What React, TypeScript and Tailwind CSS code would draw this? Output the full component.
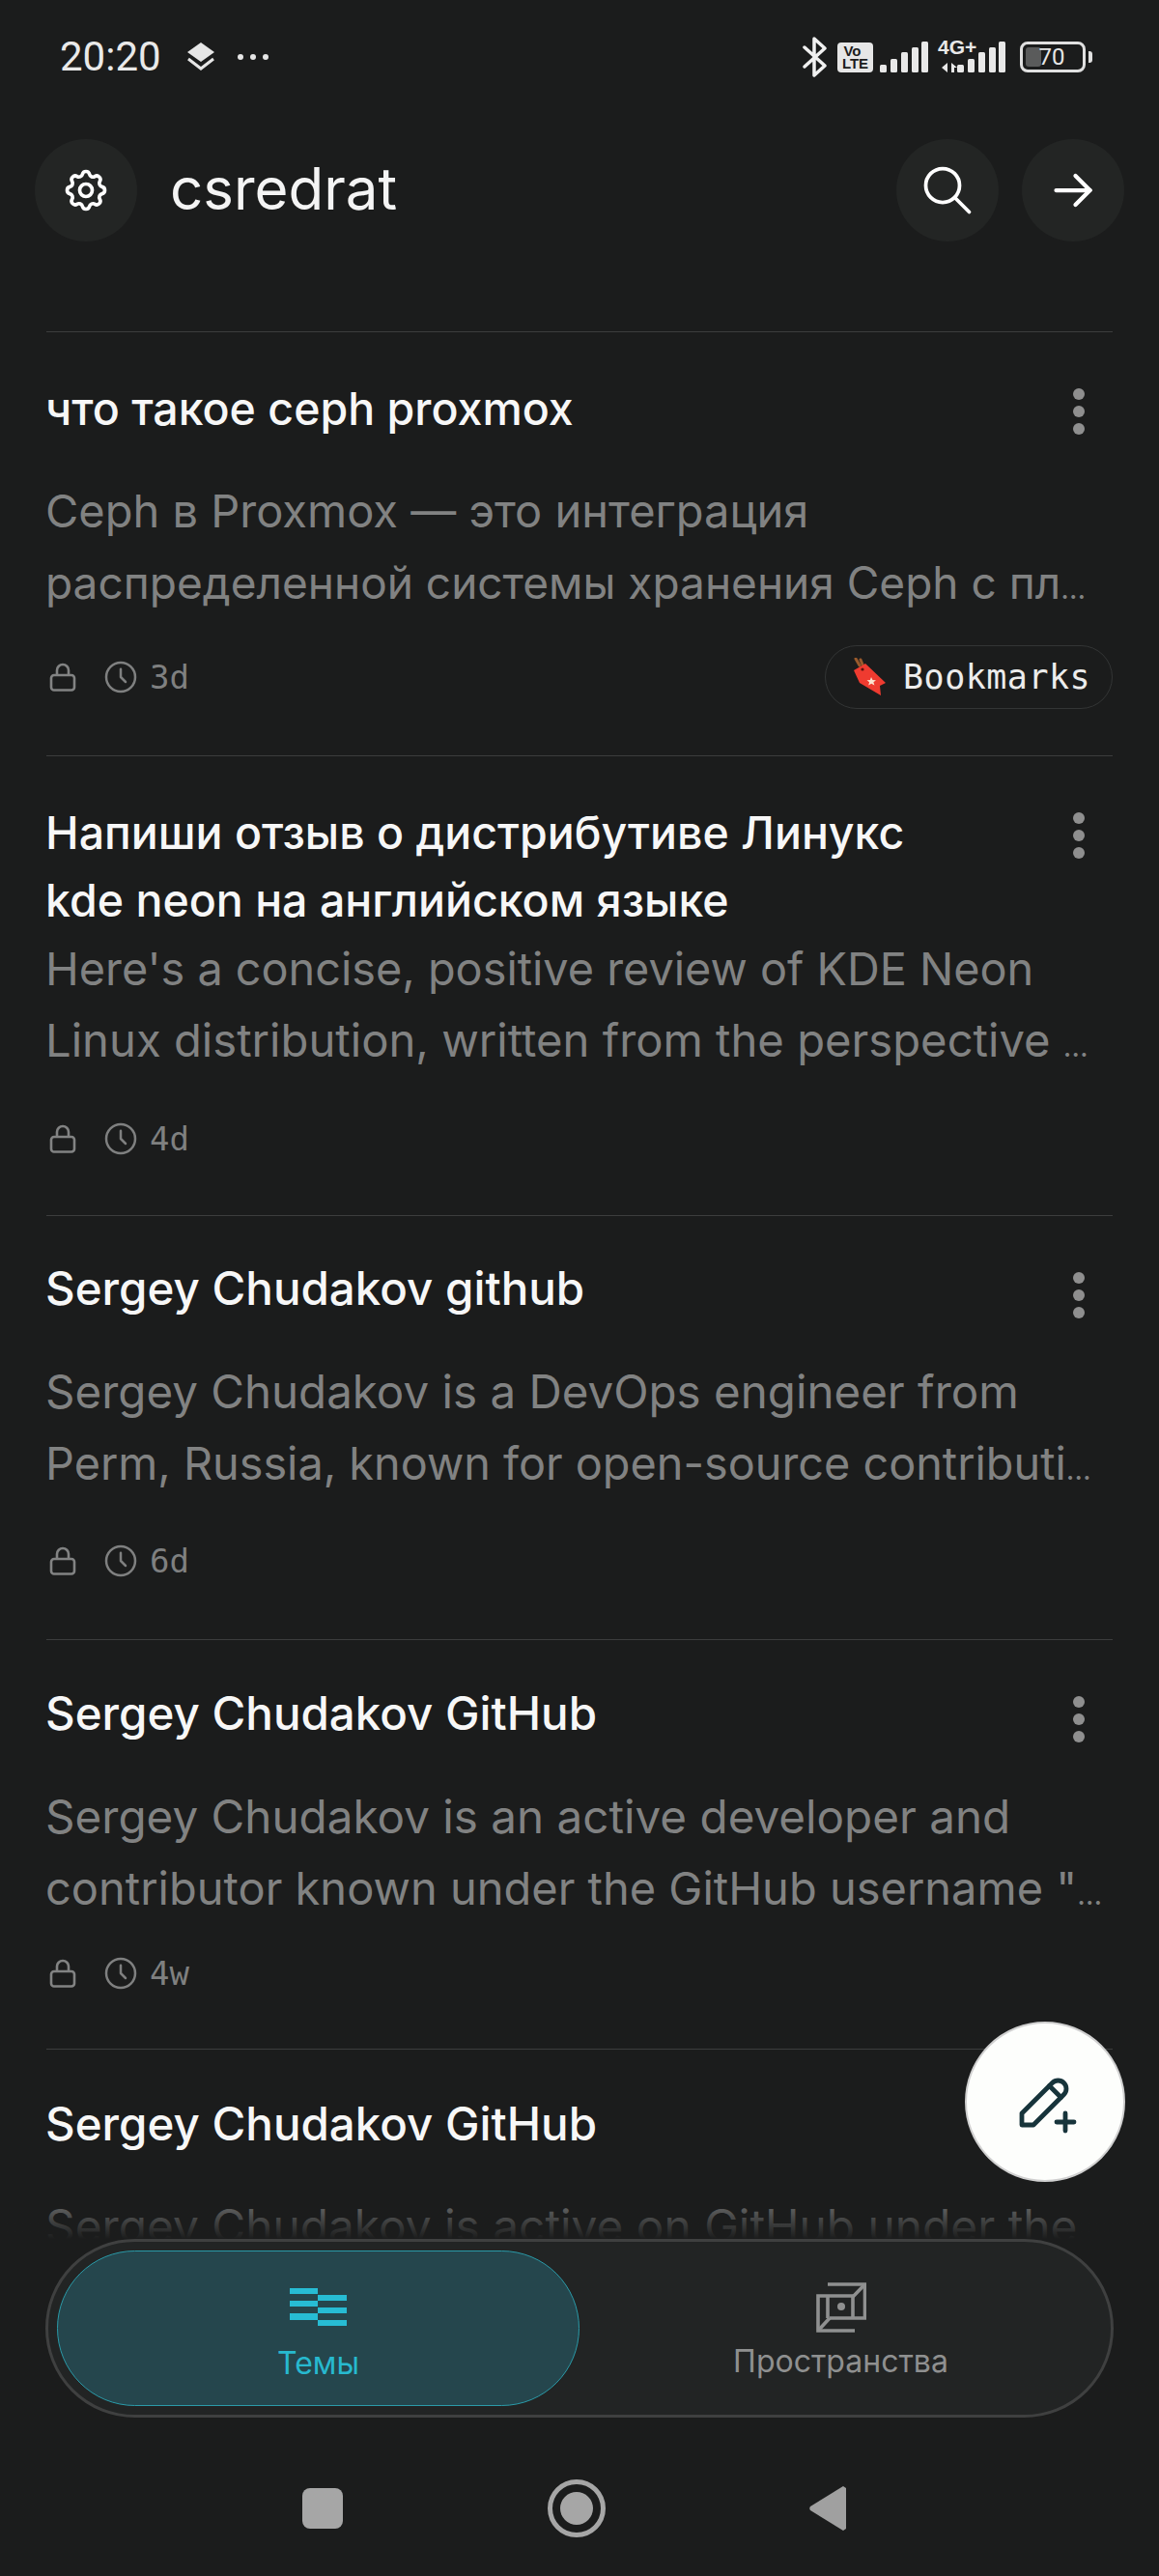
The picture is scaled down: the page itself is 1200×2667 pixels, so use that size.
import React from "react";
import { TbSettings, TbSearch, TbArrowRight, TbClock, TbPencilPlus } from "react-icons/tb";

const Bars = ({ cls = "" }: { cls?: string }) => (
  <svg width="50" height="32" viewBox="0 0 50 32" className={cls} fill="#e8e8e8">
    <rect x="0" y="24" width="7" height="8" rx="1.5" />
    <rect x="11" y="18" width="7" height="14" rx="1.5" />
    <rect x="22" y="11" width="7" height="21" rx="1.5" />
    <rect x="33" y="6" width="7" height="26" rx="1.5" />
    <rect x="43" y="0" width="7" height="32" rx="1.5" />
  </svg>
);

const StatusBar = () => (
  <div className="h-[118px] flex items-center justify-between pl-[62px] pr-[69px] shrink-0">
    <div className="flex items-center">
      <span className="text-[42px] leading-none text-[#e9e9e9] font-['Roboto',sans-serif] w-[131px]">20:20</span>
      <svg width="30" height="32" viewBox="0 0 30 32" fill="none">
        <path d="M15 1 29 11 15 21 1 11Z" fill="#e6e6e6" />
        <path d="M2 18 15 28 28 18" stroke="#e6e6e6" strokeWidth="3" />
      </svg>
      <div className="flex gap-[7px] ml-[23px]">
        <span className="w-[6px] h-[6px] rounded-full bg-[#e6e6e6]" />
        <span className="w-[6px] h-[6px] rounded-full bg-[#e6e6e6]" />
        <span className="w-[6px] h-[6px] rounded-full bg-[#e6e6e6]" />
      </div>
    </div>
    <div className="flex items-center">
      <svg width="26" height="42" viewBox="0 0 26 42" fill="none" stroke="#f0f0f0" strokeWidth="3.5" strokeLinejoin="round" strokeLinecap="round">
        <path d="M2 11 23 30 12 40V2L23 12 2 31" />
      </svg>
      <div className="ml-[10px] w-[37px] h-[31px] rounded-[4px] bg-[#e6e6e6] flex flex-col items-center justify-center text-[#1b1c1c] font-bold font-['Liberation_Sans',sans-serif] text-[15px] leading-[13px]">
        <span className="pr-[6px]">Vo</span>
        <span>LTE</span>
      </div>
      <Bars cls="ml-[7px]" />
      <div className="relative w-[41px] h-[32px] ml-[10px] -mr-[21px] shrink-0 text-[#e8e8e8]">
        <span className="absolute left-0 -top-[4px] text-[21px] leading-[20px] font-bold font-['Liberation_Sans',sans-serif] whitespace-nowrap">4G+</span>
        <svg className="absolute left-[3px] bottom-0" width="18" height="10" viewBox="0 0 18 10" fill="#e8e8e8">
          <path d="M7 0V10L1 5ZM11 0 17 5H11Z M11 5H14V10H11Z" />
        </svg>
      </div>
      <Bars />
      <div className="ml-[15px] w-[68px] h-[32px] rounded-[8px] border-[3px] border-[#e0e0e0] p-[3px] relative">
        <div className="w-[16px] h-full rounded-[3px] bg-[#5a5b5b]" />
        <span className="absolute inset-0 flex items-center justify-center text-[24px] leading-none text-[#e6e6e6] font-['Roboto',sans-serif] -ml-[2px]">70</span>
      </div>
      <div className="w-[4px] h-[12px] ml-[3px] rounded-r-[3px] bg-[#e0e0e0]" />
    </div>
  </div>
);

const Round = ({ children }: { children: React.ReactNode }) => (
  <div className="w-[106px] h-[106px] rounded-full bg-[#232524] flex items-center justify-center text-white">{children}</div>
);

const Header = () => (
  <div className="h-[158px] shrink-0 flex items-center pl-[36px] pr-[36px]">
    <Round><TbSettings size={52} strokeWidth={1.7} /></Round>
    <span className="ml-[34px] -mt-[4px] text-[60px] leading-none text-[#f4f4f4] flex-1">csredrat</span>
    <div className="flex gap-[24px]">
      <Round><TbSearch size={60} strokeWidth={1.5} /></Round>
      <Round><TbArrowRight size={60} strokeWidth={1.7} /></Round>
    </div>
  </div>
);

const Tag = () => (
  <svg width="38" height="40" viewBox="0 0 38 40">
    <path d="M9 8 5 1M12 7 10 2" stroke="#9a5a2c" strokeWidth="3" fill="none" strokeLinecap="round" />
    <path d="M3 13 15 6 36 26 30 29 31 39 9 26Z" fill="#ef3b30" />
    <circle cx="12" cy="12" r="1.6" fill="#5a1410" />
    <path d="M21 20l1.5 3 3.5.3-2.6 2 1 3.2-3.2-1.7-3 1.7.9-3.3-2.6-2 3.4-.3Z" fill="#fbe3d0" />
  </svg>
);

const LockIcon = () => (
  <svg width="28" height="30" viewBox="0 0 28 30" fill="none" stroke="#828383" strokeWidth="2.6" strokeLinejoin="round">
    <rect x="2" y="13" width="24" height="15.5" rx="3" />
    <path d="M8 13V8a6 6 0 0 1 12 0v5" />
  </svg>
);

type ItemProps = {
  title: string[];
  titleCls: string;
  lines: [string, string][];
  age: string;
  tag?: boolean;
  box: string;
  dotsTop: string;
  bodyTop: string;
  metaTop: string;
};

const Item = ({ title, titleCls, lines, age, tag, box, dotsTop, bodyTop, metaTop }: ItemProps) => (
  <div className={`border-t border-[#3c3d3d] ${box}`}>
    <div className="flex justify-between">
      <div className={`${titleCls} font-medium text-[#f7f7f7] -ml-[1px]`}>
        {title.map((t) => (
          <div key={t}>{t}</div>
        ))}
      </div>
      <div className={`flex flex-col gap-[6px] pr-[29px] ${dotsTop}`}>
        <span className="w-[12px] h-[12px] rounded-full bg-[#8f8f8f]" />
        <span className="w-[12px] h-[12px] rounded-full bg-[#8f8f8f]" />
        <span className="w-[12px] h-[12px] rounded-full bg-[#8f8f8f]" />
      </div>
    </div>
    <div className={`${bodyTop} leading-[74px] text-[#818282] -ml-[1px]`}>
      {lines.map(([l, size]) => (
        <div key={l} className={`${size} whitespace-nowrap`}>
          {l.endsWith("…") ? (
            <>
              {l.slice(0, -1)}
              <span className="text-[30px] leading-none">…</span>
            </>
          ) : (
            l
          )}
        </div>
      ))}
    </div>
    <div className={`${metaTop} h-[66px] flex items-center justify-between text-[#7f8080]`}>
      <div className="flex items-center">
        <div className="ml-[3px]"><LockIcon /></div>
        <TbClock size={40} strokeWidth={1.5} className="ml-[26px]" />
        <span className="ml-[10px] text-[34px] leading-none font-['DejaVu_Sans_Mono',monospace]">{age}</span>
      </div>
      {tag && (
        <div className="h-[66px] w-[298px] rounded-full border border-[#333535] flex items-center pl-[26px] text-[#ececec]">
          <Tag />
          <span className="ml-[16px] text-[35px] leading-none tracking-[0.5px] font-['DejaVu_Sans_Mono',monospace]">Bookmarks</span>
        </div>
      )}
    </div>
  </div>
);

const SpacesIcon = () => (
  <svg width="52" height="52" viewBox="0 0 52 52" fill="none" stroke="#8f9090" strokeWidth="3.6">
    <path d="M12 2H50.5V37H38M14 37H38V14H2V50H40" />
    <path d="M12 14V37M50.5 2 38 15M2 50 14 37" />
    <circle cx="26" cy="25" r="4" fill="#8f9090" stroke="none" />
  </svg>
);

const ThreadsIcon = () => (
  <svg width="59" height="39" viewBox="0 0 59 39" fill="#27bcd4">
    <rect x="0" y="0" width="29" height="6" />
    <rect x="0" y="13" width="29" height="6" />
    <rect x="0" y="26" width="29" height="7" />
    <rect x="29" y="7" width="30" height="6" />
    <rect x="29" y="20" width="30" height="6" />
    <rect x="29" y="33" width="30" height="6" />
  </svg>
);

const BottomBar = () => (
  <div className="absolute inset-x-0 bottom-0">
    <div className="h-[50px] bg-gradient-to-b from-[#1b1c1c00] to-[#1b1c1c]" />
    <div className="bg-[#1b1c1c] px-[47px]">
      <div className="h-[185px] rounded-full border-[3px] border-[#3f4040] bg-[#222424] p-[9px] flex">
        <div className="w-[541px] rounded-full bg-[#25464d] border border-[#2a9aa8] flex flex-col items-center pt-[38px]">
          <ThreadsIcon />
          <span className="mt-[19px] text-[32px] leading-[40px] text-[#27b9cf]">Темы</span>
        </div>
        <div className="flex-1 flex flex-col items-center pt-[33px]">
          <SpacesIcon />
          <span className="mt-[10px] text-[32px] leading-[40px] text-[#8f9090]">Пространства</span>
        </div>
      </div>
    </div>
    <div className="h-[164px] bg-[#1b1c1c] pl-[313px] pt-[70px] flex items-start">
      <div className="w-[42px] h-[42px] mt-[3px] rounded-[8px] bg-[#a6a6a6]" />
      <div className="ml-[212px] -mt-[6px] w-[60px] h-[60px] rounded-full border-[5px] border-[#a6a6a6] flex items-center justify-center">
        <div className="w-[34px] h-[34px] rounded-full bg-[#a6a6a6]" />
      </div>
      <svg className="ml-[211px]" width="39" height="48" viewBox="0 0 39 48" fill="#a0a0a0">
        <path d="M35 1 38 3V45L35 47 1 26Q-.5 24 1 22Z" />
      </svg>
    </div>
  </div>
);

export default function App() {
  return (
    <div className="relative w-[1200px] h-[2667px] overflow-hidden bg-[#1b1c1c] flex flex-col font-['Inter','Liberation_Sans',sans-serif]">
      <StatusBar />
      <Header />
      <div className="flex-1 overflow-hidden px-[48px] pt-[67px]">
        <Item
          title={["что такое ceph proxmox"]}
          titleCls="text-[46.5px] leading-[69px]"
          lines={[
            ["Ceph в Proxmox — это интеграция", "text-[47px]"],
            ["распределенной системы хранения Ceph с пл…", "text-[46px]"],
          ]}
          age="3d"
          tag
          box="pt-[45px] pb-[48px]"
          dotsTop="pt-[13px]"
          bodyTop="mt-[34px]"
          metaTop="mt-[28px]"
        />
        <Item
          title={["Напиши отзыв о дистрибутиве Линукс", "kde neon на английском языке"]}
          titleCls="text-[46.5px] leading-[70px]"
          lines={[
            ["Here's a concise, positive review of KDE Neon", "text-[46.8px]"],
            ["Linux distribution, written from the perspective …", "text-[47.2px]"],
          ]}
          age="4d"
          box="pt-[44px] pb-[46px]"
          dotsTop="pt-[14px]"
          bodyTop="-mt-[1px]"
          metaTop="mt-[32px]"
        />
        <Item
          title={["Sergey Chudakov github"]}
          titleCls="text-[47.5px] leading-[69px]"
          lines={[
            ["Sergey Chudakov is a DevOps engineer from", "text-[47.5px]"],
            ["Perm, Russia, known for open-source contributi…", "text-[46.8px]"],
          ]}
          age="6d"
          box="pt-[40px] pb-[48px]"
          dotsTop="pt-[18px]"
          bodyTop="mt-[36px]"
          metaTop="mt-[31px]"
        />
        <Item
          title={["Sergey Chudakov GitHub"]}
          titleCls="text-[47.5px] leading-[69px]"
          lines={[
            ["Sergey Chudakov is an active developer and", "text-[47.6px]"],
            ['contributor known under the GitHub username "…', "text-[47px]"],
          ]}
          age="4w"
          box="pt-[41px] pb-[45px]"
          dotsTop="pt-[17px]"
          bodyTop="mt-[36px]"
          metaTop="mt-[18px]"
        />
        <Item
          title={["Sergey Chudakov GitHub"]}
          titleCls="text-[47.5px] leading-[69px]"
          lines={[
            ["Sergey Chudakov is active on GitHub under the", "text-[47.8px]"],
            ["username csredrat", "text-[47.8px]"],
          ]}
          age="4w"
          box="pt-[42px] pb-[46px]"
          dotsTop="pt-[16px]"
          bodyTop="mt-[35px]"
          metaTop="mt-[16px]"
        />
      </div>
      <BottomBar />
      <div className="absolute left-[999px] top-[2093px] w-[166px] h-[166px] rounded-full bg-[#fdfefc] border-2 border-[#d0d0d0] flex items-center justify-center text-[#17343b]">
        <TbPencilPlus size={72} strokeWidth={1.6} />
      </div>
    </div>
  );
}
